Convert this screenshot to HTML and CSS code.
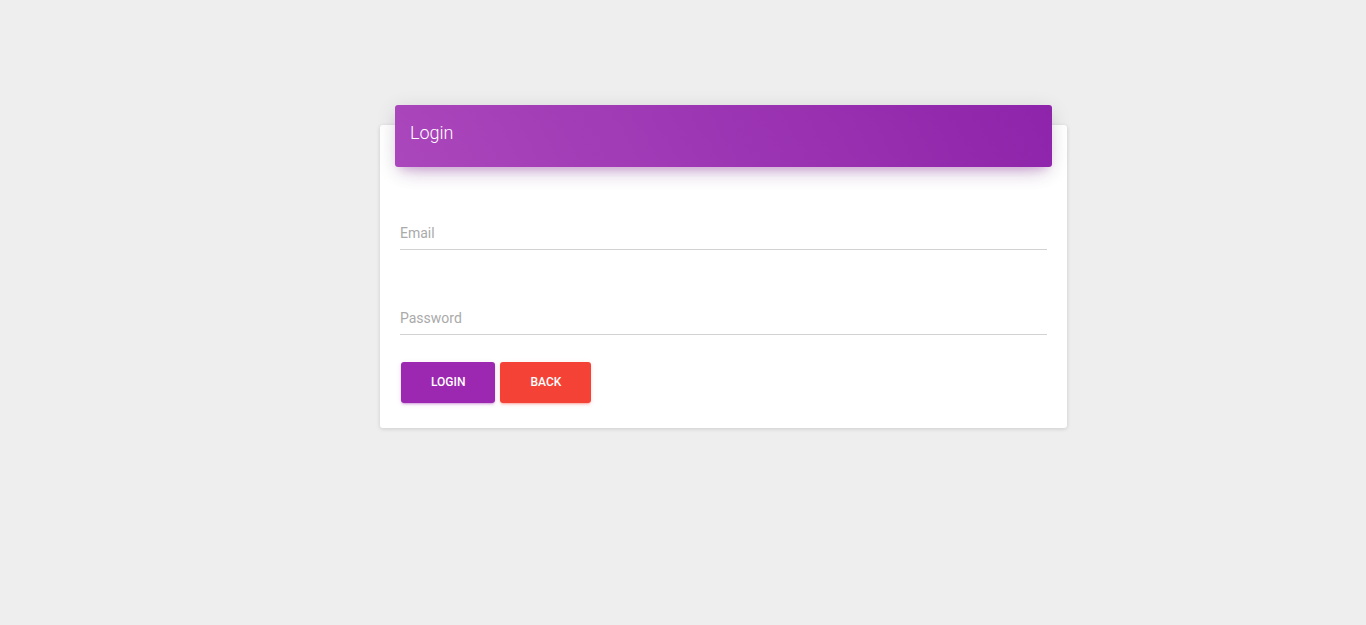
FILE: index.html
```html
<!DOCTYPE html>
<html lang="en">
<head>
<meta charset="utf-8">
<meta name="viewport" content="width=device-width, initial-scale=1">
<title>Login</title>
<link rel="stylesheet" href="styles.css">
</head>
<body>
<main class="page">
  <section class="card">
    <header class="card-header">
      <h4 class="card-title">Login</h4>
    </header>
    <form class="card-body">
      <div class="field">
        <input class="field-input" id="email" type="email" placeholder="Email" aria-label="Email">
      </div>
      <div class="field">
        <input class="field-input" id="password" type="password" placeholder="Password" aria-label="Password">
      </div>
      <div class="actions">
        <button class="btn btn-primary" type="submit">Login</button>
        <a class="btn btn-danger" href="#">Back</a>
      </div>
    </form>
  </section>
</main>
</body>
</html>
```
FILE: styles.css
```css
* {
  box-sizing: border-box;
}

body {
  margin: 0;
  min-height: 100vh;
  background: #eee;
  color: #333;
  font-family: Roboto, "Liberation Sans", sans-serif;
  font-size: 14px;
  line-height: 20px;
}

.page {
  max-width: 1170px;
  margin: 0 auto;
  padding: 125px 201px 40px 282px;
}

.card {
  display: flow-root;
  padding: 0 15px 25px;
  border-radius: 3px;
  background: #fff;
  box-shadow: 0 1px 4px 0 rgba(0, 0, 0, 0.14);
}

.card-header {
  margin-top: -20px;
  padding: 15px 15px 21px;
  border-radius: 3px;
  background: linear-gradient(60deg, #ab47bc, #8e24aa);
  box-shadow: 0 12px 20px -10px rgba(156, 39, 176, 0.28),
    0 4px 20px 0 rgba(0, 0, 0, 0.12),
    0 7px 8px -5px rgba(156, 39, 176, 0.2);
}

.card-title {
  margin: 0;
  color: #fff;
  font-size: 18px;
  font-weight: 300;
  line-height: 26px;
}

.card-body {
  padding: 48px 5px 0;
}

.field + .field {
  margin-top: 50px;
}

.field-input {
  display: block;
  width: 100%;
  height: 35px;
  padding: 8px 0 6px;
  border: 0;
  border-bottom: 1px solid #d2d2d2;
  border-radius: 0;
  outline: 0;
  background: transparent;
  color: #555;
  font: inherit;
}

.field-input::placeholder {
  color: #aaa;
  opacity: 1;
}

.actions {
  display: flex;
  gap: 5px;
  margin-top: 27px;
  padding: 0 1px;
}

.btn {
  padding: 12px 30px;
  border: 0;
  border-radius: 3px;
  color: #fff;
  font-family: inherit;
  font-size: 12px;
  font-weight: 500;
  line-height: 17px;
  text-align: center;
  text-decoration: none;
  text-transform: uppercase;
  cursor: pointer;
}

.btn-primary {
  background: #9c27b0;
  box-shadow: 0 2px 2px 0 rgba(156, 39, 176, 0.14),
    0 3px 1px -2px rgba(156, 39, 176, 0.2),
    0 1px 5px 0 rgba(156, 39, 176, 0.12);
}

.btn-danger {
  background: #f44336;
  box-shadow: 0 2px 2px 0 rgba(244, 67, 54, 0.14),
    0 3px 1px -2px rgba(244, 67, 54, 0.2),
    0 1px 5px 0 rgba(244, 67, 54, 0.12);
}

@media (max-width: 991px) {
  .page {
    padding-right: 15px;
    padding-left: 15px;
  }
}
```
